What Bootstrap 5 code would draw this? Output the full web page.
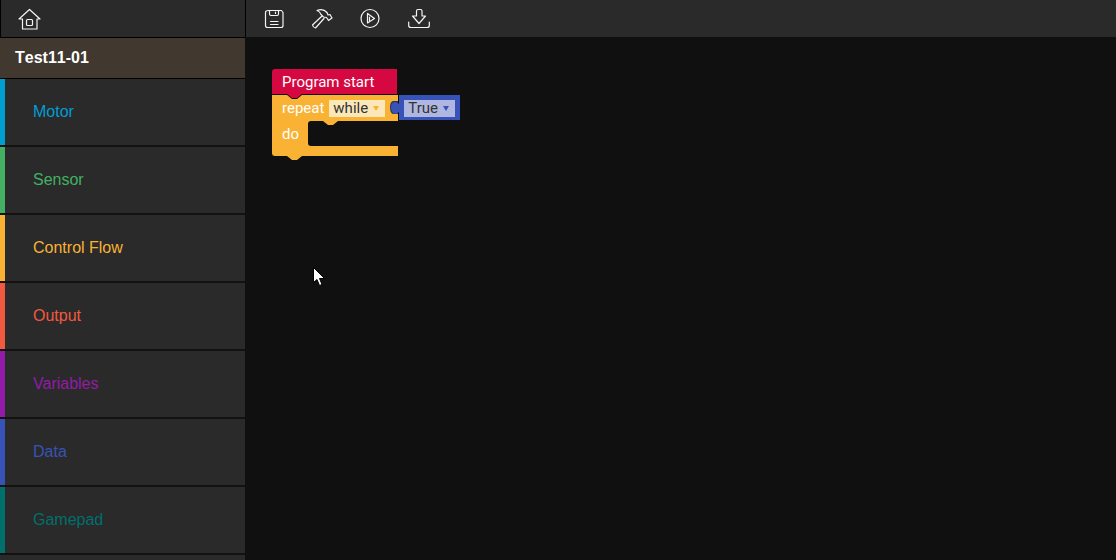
<!DOCTYPE html>
<html lang="en">
<head>
<meta charset="utf-8">
<meta name="viewport" content="width=device-width, initial-scale=1">
<title>Test11-01</title>
<link href="https://cdn.jsdelivr.net/npm/bootstrap@5.3.0/dist/css/bootstrap.min.css" rel="stylesheet">
<style>
  body { background: #101010; font-family: "Liberation Sans", Arial, sans-serif; font-size: 16px; }
  .palette { width: 245px; background: #2a2a2a; }
  .bar { height: 38px; background: #2a2a2a; }
  .bar-home { border: solid #000; border-width: 0 0 1px 1px; padding-left: 17px; }
  .bar-tools { height: 37px; border-left: 1px solid #000; padding-left: 17px; gap: 24px; }
  .tool { width: 24px; height: 24px; padding: 0; border: 0; background: none; color: #f4f4f4; line-height: 0; }
  .tool svg { fill: none; stroke: currentColor; stroke-width: 1.2; stroke-linejoin: round; stroke-linecap: round; }
  .project { height: 41px; background: #41382f; border-bottom: 1px solid #000; padding-left: 15px; font-size: 16px; line-height: 24px; font-kerning: none; }
  .category { height: 68px; background: #2a2a2a; border: 0; border-bottom: 2px solid #151111; padding: 0 0 0 33px; text-align: left; color: var(--tone); box-shadow: inset 5px 0 var(--tone); }
  .workspace { position: relative; }
  .script { position: absolute; left: 27px; top: 32px; width: 190px; font-family: Roboto, sans-serif; font-size: 15px; line-height: 26px; color: #fff; }
  .script-shape { position: absolute; left: 0; top: 0; }
  .line { position: relative; height: 26px; padding-left: 10px; }
  .pick { position: relative; height: 17px; line-height: 17px; }
  .pick select { appearance: none; border: 0; border-radius: 0; padding: 0 0 0 4px; font: inherit; line-height: 17px; height: 17px; width: 100%; display: block; color: #333; }
  .pick svg { position: absolute; right: 6px; top: 6px; pointer-events: none; }
  .pick-while { width: 56px; margin-left: 5px; color: #f9b233; }
  .pick-while select { background: #fbe7b8; }
  .pick-true { width: 51px; margin-left: 19px; color: #3853b7; }
  .pick-true select { background: #afb7e0; }
  .pointer { position: absolute; left: 68px; top: 230px; }
</style>
</head>
<body class="vh-100 d-flex overflow-hidden">
<aside class="palette flex-shrink-0 d-flex flex-column overflow-hidden">
  <div class="bar bar-home flex-shrink-0 d-flex align-items-center">
    <button class="tool" type="button" aria-label="Home">
      <svg width="24" height="24" viewBox="0 0 24 24"><path d="M1 12 11.500 2.500 22 12H19V22H4.500V12Z"/><rect x="8.500" y="12.500" width="6" height="6" rx="1"/></svg>
    </button>
  </div>
  <h1 class="project flex-shrink-0 d-flex align-items-center fw-bold text-white mb-0">Test11-01</h1>
  <nav class="d-flex flex-column" aria-label="Block categories">
    <button type="button" class="category" style="--tone:#009ed3">Motor</button>
    <button type="button" class="category" style="--tone:#43b064">Sensor</button>
    <button type="button" class="category" style="--tone:#f9b233">Control Flow</button>
    <button type="button" class="category" style="--tone:#f15a40">Output</button>
    <button type="button" class="category" style="--tone:#941ba8">Variables</button>
    <button type="button" class="category" style="--tone:#3853b7">Data</button>
    <button type="button" class="category" style="--tone:#00706c">Gamepad</button>
  </nav>
</aside>
<main class="flex-grow-1 d-flex flex-column">
  <div class="bar bar-tools flex-shrink-0 d-flex align-items-center" role="toolbar" aria-label="Program tools">
    <button class="tool" type="button" aria-label="Save">
      <svg width="24" height="24" viewBox="0 0 24 24"><path d="M5.500 3.500H18.500L20 5.500V18.500Q20 20.500 18 20.500H4.500Q2.500 20.500 2.500 18.500V5.500Q2.500 3.500 5.500 3.500ZM6.500 3.500V7Q6.500 8.500 8 8.500H14Q15.500 8.500 15.500 7V3.500M12.500 5V6.500M7.500 14.500H15M7.500 17.500H15"/></svg>
    </button>
    <button class="tool" type="button" aria-label="Build">
      <svg width="24" height="24" viewBox="0 0 24 24"><path d="M6 3.500Q12 1 16 5.500L17 8 19 7.500 21 11 17.500 13.500 15.500 10.500 12.500 10 10 7.500Q9 4.500 6 3.500ZM10.500 9.500 1.500 18Q2 20.500 4.500 21L13 11.500"/></svg>
    </button>
    <button class="tool" type="button" aria-label="Run">
      <svg width="24" height="24" viewBox="0 0 24 24"><circle cx="11" cy="11.500" r="9"/><path d="M8.500 6.500V16L15.500 11.500ZM10.500 10V13.500"/></svg>
    </button>
    <button class="tool" type="button" aria-label="Download">
      <svg width="24" height="24" viewBox="0 0 24 24"><path d="M9.500 9V4Q9.500 2.500 11 2.500H13.500Q15 2.500 15 4V9H18.500L12 16.500 5.500 9ZM1.700 15V18.500Q1.700 20.500 4 20.500H20Q22.300 20.500 22.300 18.500V15"/></svg>
    </button>
  </div>
  <section class="workspace flex-grow-1" aria-label="Workspace">
    <div class="script">
      <svg class="script-shape" width="190" height="92" viewBox="0 0 190 92" aria-hidden="true">
        <path fill="#d50841" d="M3 0H125V25H30L25 29H20L15 25H0V3Q0 0 3 0Z"/>
        <path fill="#f9b233" d="M0 26H15L20 30H25L30 26H126V52H66L61 56H56L51 52H39Q36 52 36 55V74Q36 77 39 77H126V87H30L25 91H20L15 87H3Q0 87 0 84Z"/>
        <path fill="#28345d" d="M126 32H121Q118 33 118 38 118 44 121 45H126Z"/>
        <path fill="#3853b7" d="M127 26H188V51H127V43L124 45Q119 45 119 38 119 33 124 33L127 35Z"/>
      </svg>
      <div class="line">Program start</div>
      <div class="line d-flex align-items-center">
        <label for="mode">repeat</label>
        <div class="pick pick-while"><select id="mode"><option>while</option><option>until</option></select><svg width="6" height="5" viewBox="0 0 6 5"><path fill="currentColor" d="M0 0H6L3 5Z"/></svg></div>
        <div class="pick pick-true"><select aria-label="Condition"><option>True</option><option>False</option></select><svg width="6" height="5" viewBox="0 0 6 5"><path fill="currentColor" d="M0 0H6L3 5Z"/></svg></div>
      </div>
      <div class="line">do</div>
    </div>
    <svg class="pointer" width="13" height="19" viewBox="0 0 13 19" aria-hidden="true"><path fill="#fff" stroke="#000" d="M.5.5V15.500L4 12.500 6.500 18.500 9 17.500 6.500 11.500H11.500Z"/></svg>
  </section>
</main>
<script src="https://cdn.jsdelivr.net/npm/bootstrap@5.3.0/dist/js/bootstrap.bundle.min.js"></script>
</body>
</html>
